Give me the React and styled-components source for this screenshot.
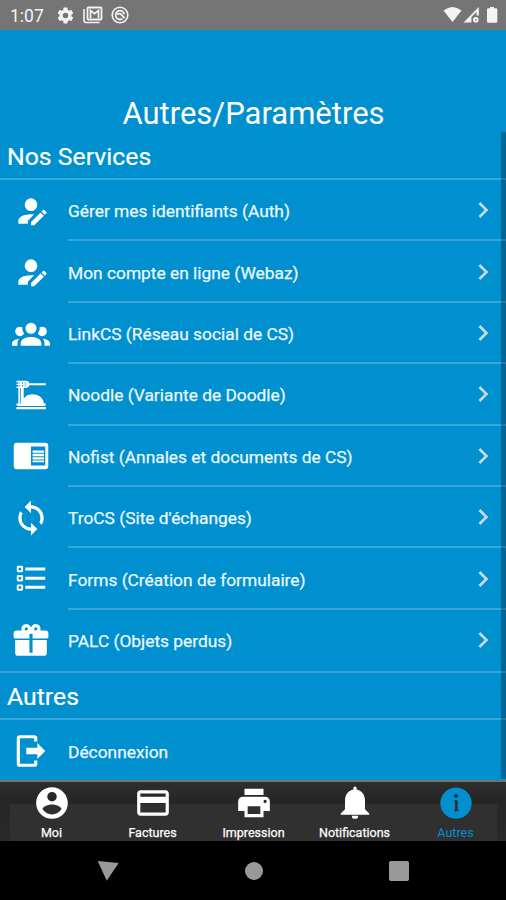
import React from 'react';
import styled, { createGlobalStyle } from 'styled-components';

const icons = {
  accountEdit:
    'M21.7,13.35L20.7,14.35L18.65,12.3L19.65,11.3C19.86,11.09 20.21,11.09 20.42,11.3L21.7,12.58C21.91,12.79 21.91,13.14 21.7,13.35M12,18.94L18.06,12.88L20.11,14.93L14.06,21H12V18.94M12,14C7.58,14 4,15.79 4,18V20H10V18.11L14,14.11C13.34,14.03 12.67,14 12,14M12,4A4,4 0 0,0 8,8A4,4 0 0,0 12,12A4,4 0 0,0 16,8A4,4 0 0,0 12,4Z',
  group:
    'M12,5.5A3.5,3.5 0 0,1 15.5,9A3.5,3.5 0 0,1 12,12.5A3.5,3.5 0 0,1 8.5,9A3.5,3.5 0 0,1 12,5.5M5,8C5.56,8 6.08,8.15 6.53,8.42C6.38,9.85 6.8,11.27 7.66,12.38C7.16,13.34 6.16,14 5,14A3,3 0 0,1 2,11A3,3 0 0,1 5,8M19,8A3,3 0 0,1 22,11A3,3 0 0,1 19,14C17.84,14 16.84,13.34 16.34,12.38C17.2,11.27 17.62,9.85 17.47,8.42C17.92,8.15 18.44,8 19,8M5.5,18.25C5.5,16.18 8.41,14.5 12,14.5C15.59,14.5 18.5,16.18 18.5,18.25V20H5.5V18.25M0,20V18.5C0,17.11 1.89,15.94 4.45,15.6C3.86,16.28 3.5,17.22 3.5,18.25V20H0M24,20H20.5V18.25C20.5,17.22 20.14,16.28 19.55,15.6C22.11,15.94 24,17.11 24,18.5V20Z',
  noodles:
    'M2.8,3H9.2Q10.6,3.3 11,4.6H21.3V5.9H11Q10.6,7.3 9.2,7.6H7.4V14.2C8.6,13.2 9,12.4 10.2,12C14.5,10.7 19.5,12.6 20.2,17.4H21.4V18.2L20.6,19H3.6L2.8,18.2V17.4H4V7.6H2.8V6.7H4V5.7H2.8V4.9H4V4H2.8ZM4.7,4V4.9H5.1V4ZM6.3,4V4.9H7V4ZM4.7,5.7V6.7H5.1V5.7ZM6.3,5.7V6.7H7V5.7ZM8.1,4V6.7H8.5V4ZM5,7.6V17.4H5.5V7.6ZM2.8,19.5H21.4V21H2.8Z',
  sync: 'M12,18A6,6 0 0,1 6,12C6,11 6.25,10.03 6.7,9.2L5.24,7.74C4.46,8.97 4,10.43 4,12A8,8 0 0,0 12,20V23L16,19L12,15M12,4V1L8,5L12,9V6A6,6 0 0,1 18,12C18,13 17.75,13.97 17.3,14.8L18.76,16.26C19.54,15.03 20,13.57 20,12A8,8 0 0,0 12,4Z',
  reader:
    'M3,3.6H21A1.9,1.9 0 0,1 22.9,5.5V18.5A1.9,1.9 0 0,1 21,20.4H3A1.9,1.9 0 0,1 1.1,18.5V5.5A1.9,1.9 0 0,1 3,3.6ZM12,6V18H21V6ZM13,8.6H20.2V10H13ZM13,10.6H20.2V12.2H13ZM13,12.8H20.2V14.2H13ZM13,14.8H20.2V15.9H13Z',
  list: 'M3.9,3.7H6.1A.9,.9 0 0,1 7,4.6V6.8A.9,.9 0 0,1 6.1,7.7H3.9A.9,.9 0 0,1 3,6.8V4.6A.9,.9 0 0,1 3.9,3.7ZM4.2,4.9V6.5H5.8V4.9ZM3.9,9.5H6.1A.9,.9 0 0,1 7,10.4V12.6A.9,.9 0 0,1 6.1,13.5H3.9A.9,.9 0 0,1 3,12.6V10.4A.9,.9 0 0,1 3.9,9.5ZM4.2,10.7V12.3H5.8V10.7ZM3.9,15.4H6.1A.9,.9 0 0,1 7,16.3V18.5A.9,.9 0 0,1 6.1,19.4H3.9A.9,.9 0 0,1 3,18.5V16.3A.9,.9 0 0,1 3.9,15.4ZM4.2,16.6V18.2H5.8V16.6ZM8.4,4.8H21V6.7H8.4ZM8.4,10.5H21V12.4H8.4ZM8.4,16.3H21V18.2H8.4Z',
  gift: 'M9.06,1.93C7.17,1.92 5.33,3.74 6.17,6H3A2,2 0 0,0 1,8V10A1,1 0 0,0 2,11H11V8H13V11H22A1,1 0 0,0 23,10V8A2,2 0 0,0 21,6H17.83C19,2.73 14.6,0.42 12.57,3.24L12,4L11.43,3.22C10.8,2.33 9.93,1.94 9.06,1.93M9,4C9.89,4 10.34,5.08 9.71,5.71C9.08,6.34 8,5.89 8,5A1,1 0 0,1 9,4M15,4C15.89,4 16.34,5.08 15.71,5.71C15.08,6.34 14,5.89 14,5A1,1 0 0,1 15,4M2,12V20A2,2 0 0,0 4,22H20A2,2 0 0,0 22,20V12H13V20H11V12H2Z',
  logout:
    'M16,17V14H9V10H16V7L21,12L16,17M14,2A2,2 0 0,1 16,4V6H14V4H5V20H14V18H16V20A2,2 0 0,1 14,22H5A2,2 0 0,1 3,20V4A2,2 0 0,1 5,2H14Z',
  chevron: 'M8.59,16.58L13.17,12L8.59,7.41L10,6L16,12L10,18L8.59,16.58Z',
  account:
    'M12,19.2C9.5,19.2 7.29,17.92 6,16C6.03,14 10,12.9 12,12.9C14,12.9 17.97,14 18,16C16.71,17.92 14.5,19.2 12,19.2M12,5A3,3 0 0,1 15,8A3,3 0 0,1 12,11A3,3 0 0,1 9,8A3,3 0 0,1 12,5M12,2A10,10 0 0,0 2,12A10,10 0 0,0 12,22A10,10 0 0,0 22,12C22,6.47 17.5,2 12,2Z',
  card: 'M20,8H4V6H20M20,18H4V12H20M20,4H4C2.89,4 2,4.89 2,6V18C2,19.11 2.9,20 4,20H20C21.11,20 22,19.11 22,18V6C22,4.89 21.1,4 20,4Z',
  printer:
    'M18,3H6V7H18M19,12A1,1 0 0,1 18,11A1,1 0 0,1 19,10A1,1 0 0,1 20,11A1,1 0 0,1 19,12M16,19H8V14H16M19,8H5A3,3 0 0,0 2,11V17H6V21H18V17H22V11A3,3 0 0,0 19,8Z',
  bell: 'M14,20A2,2 0 0,1 12,22A2,2 0 0,1 10,20H14M12,1.6A1,1 0 0,1 13,2.6V3.4C16,4 18.3,6.6 18.3,10V16L21,18.6V19.4H3V18.6L5.7,16V10C5.7,6.6 8,4 11,3.4V2.6A1,1 0 0,1 12,1.6Z',
  info: 'M12,2.2A9.9,9.9 0 1,0 12,22A9.9,9.9 0 1,0 12,2.2ZM12,6.4A1.2,1.2 0 1,1 12,8.8A1.2,1.2 0 1,1 12,6.4ZM11,10.3H13V16.2H13.5V17.2H10.8V16.2H11.4V11.3H11Z',
  settings:
    'M12,15.5A3.5,3.5 0 0,1 8.5,12A3.5,3.5 0 0,1 12,8.5A3.5,3.5 0 0,1 15.5,12A3.5,3.5 0 0,1 12,15.5M19.43,12.97C19.47,12.65 19.5,12.33 19.5,12C19.5,11.67 19.47,11.34 19.43,11L21.54,9.37C21.73,9.22 21.78,8.95 21.66,8.73L19.66,5.27C19.54,5.05 19.27,4.96 19.05,5.05L16.56,6.05C16.04,5.66 15.5,5.32 14.87,5.07L14.5,2.42C14.46,2.18 14.25,2 14,2H10C9.75,2 9.54,2.18 9.5,2.42L9.13,5.07C8.5,5.32 7.96,5.66 7.44,6.05L4.95,5.05C4.73,4.96 4.46,5.05 4.34,5.27L2.34,8.73C2.21,8.95 2.27,9.22 2.46,9.37L4.57,11C4.53,11.34 4.5,11.67 4.5,12C4.5,12.33 4.53,12.65 4.57,12.97L2.46,14.63C2.27,14.78 2.21,15.05 2.34,15.27L4.34,18.73C4.46,18.95 4.73,19.03 4.95,18.95L7.44,17.94C7.96,18.34 8.5,18.68 9.13,18.93L9.5,21.58C9.54,21.82 9.75,22 10,22H14C14.25,22 14.46,21.82 14.5,21.58L14.87,18.93C15.5,18.67 16.04,18.34 16.56,17.94L19.05,18.95C19.27,19.03 19.54,18.95 19.66,18.73L21.66,15.27C21.78,15.05 21.73,14.78 21.54,14.63L19.43,12.97Z',
};

const services = [
  { icon: 'accountEdit', label: 'Gérer mes identifiants (Auth)' },
  { icon: 'accountEdit', label: 'Mon compte en ligne (Webaz)' },
  { icon: 'group', label: 'LinkCS (Réseau social de CS)' },
  { icon: 'noodles', label: 'Noodle (Variante de Doodle)' },
  { icon: 'reader', label: 'Nofist (Annales et documents de CS)' },
  { icon: 'sync', label: "TroCS (Site d'échanges)" },
  { icon: 'list', label: 'Forms (Création de formulaire)' },
  { icon: 'gift', label: 'PALC (Objets perdus)' },
];

const tabs = [
  { icon: 'account', label: 'Moi' },
  { icon: 'card', label: 'Factures' },
  { icon: 'printer', label: 'Impression' },
  { icon: 'bell', label: 'Notifications' },
  { icon: 'info', label: 'Autres', active: true },
];

const Icon = ({ name, size = 38 }) => (
  <svg width={size} height={size} viewBox='0 0 24 24' fill='currentColor'>
    <path fillRule='evenodd' d={icons[name]} />
  </svg>
);

const StatusBar = () => (
  <Status>
    <Clock>1:07</Clock>
    <StatusIcons>
      <Icon name='settings' size={19} />
      <svg width='20' height='18' viewBox='0 0 20 18' fill='none' stroke='currentColor'>
        <path d='M1 3V14.5Q1 16.5 3 16.5H16.5' strokeWidth='1.6' />
        <rect x='4.5' y='1.5' width='14' height='12' rx='1' strokeWidth='1.8' />
        <path d='M7.5 12V4.5L11.5 7.6L15.5 4.5V12' strokeWidth='1.7' />
      </svg>
      <svg width='18' height='18' viewBox='0 0 18 18' fill='none' stroke='currentColor'>
        <circle cx='9' cy='9' r='7.8' strokeWidth='1.6' />
        <path
          d='M11.6 12.6A4.4 4.4 0 1 1 13.3 8.2M6.2 8.6Q8.6 6.6 10.4 8.6L13.6 12.2'
          strokeWidth='1.8'
        />
      </svg>
    </StatusIcons>
    <Signals width='56' height='18' viewBox='0 0 56 18' fill='currentColor'>
      <path d='M0.5 4.6Q9.5 -2.6 18.5 4.6L9.5 16Z' />
      <path
        fillRule='evenodd'
        d='M20.6 16.6L35.8 1V9.4H33.6V5.7L28.4 11V16.6ZM32.8 11A2.8 2.8 0 1 1 32.8 16.6A2.8 2.8 0 1 1 32.8 11ZM32.8 13.1A.8 .8 0 1 0 32.8 14.7A.8 .8 0 1 0 32.8 13.1Z'
      />
      <path d='M47 1H51V2.3H53Q54.3 2.3 54.3 3.6V15.3Q54.3 16.8 53 16.8H45.2Q44 16.8 44 15.3V3.6Q44 2.3 45.2 2.3H47Z' />
    </Signals>
  </Status>
);

const Service = ({ icon, label, last, arrow = true }) => (
  <Row>
    <IconCell>
      <Icon name={icon} />
    </IconCell>
    <RowBody $line={!last}>
      <RowLabel>{label}</RowLabel>
      {arrow && (
        <Chevron>
          <Icon name='chevron' size={32} />
        </Chevron>
      )}
    </RowBody>
  </Row>
);

const App = () => {
  return (
    <>
      <GlobalStyle />
      <Screen>
        <StatusBar />
        <Title>Autres/Paramètres</Title>
        <Content>
          <SectionTitle>Nos Services</SectionTitle>
          <List>
            {services.map((item, index) => (
              <Service
                key={item.label}
                {...item}
                last={index === services.length - 1}
              />
            ))}
          </List>
          <SectionTitle $divided>Autres</SectionTitle>
          <List>
            <Service icon='logout' label='Déconnexion' arrow={false} last />
          </List>
          <ScrollThumb />
        </Content>
        <TabBar>
          <TabList>
            {tabs.map(({ icon, label, active }) => (
              <Tab key={label} $active={active}>
                <Icon name={icon} />
                <span>{label}</span>
              </Tab>
            ))}
          </TabList>
        </TabBar>
        <SystemNav>
          <svg width='22' height='20' viewBox='0 0 22 20' fill='currentColor'>
            <path d='M0.7 0L21.7 2L9.7 19.7Z' />
          </svg>
          <HomeButton />
          <RecentButton />
        </SystemNav>
      </Screen>
    </>
  );
};

const GlobalStyle = createGlobalStyle`
  * {
    box-sizing: border-box;
  }

  body {
    margin: 0;
    background: #000;
    font-family: Roboto, sans-serif;
  }

  svg {
    display: block;
    flex: none;
  }
`;

const Screen = styled.div`
  width: 506px;
  height: 900px;
  display: flex;
  flex-direction: column;
  overflow: hidden;
  background: #008fcf;
  color: #fff;
`;

const Status = styled.header`
  height: 30px;
  flex: none;
  display: flex;
  align-items: center;
  padding: 0 7px 0 10px;
  background: #757575;
  color: #f4f4f4;
`;

const Clock = styled.span`
  width: 46px;
  font-size: 17.5px;
  line-height: 30px;
  padding-top: 1px;
`;

const StatusIcons = styled.div`
  display: flex;
  align-items: center;
  gap: 8px;
`;

const Signals = styled.svg`
  margin-left: auto;
`;

const Title = styled.h1`
  height: 102px;
  flex: none;
  margin: 0;
  padding: 64px 0 0 1px;
  font-size: 31px;
  font-weight: 400;
  line-height: 40px;
  text-align: center;
`;

const Content = styled.main`
  position: relative;
  height: 648px;
  flex: none;
`;

const SectionTitle = styled.h2`
  height: ${({ $divided }) => ($divided ? '49px' : '48px')};
  margin: 0;
  padding-left: 7px;
  border-top: ${({ $divided }) => ($divided ? '2px solid #3aa5db' : 'none')};
  border-bottom: 2px solid #3aa5db;
  font-size: 24.8px;
  font-weight: 400;
  line-height: ${({ $divided }) => ($divided ? '48px' : '50px')};
  -webkit-text-stroke: 0.2px currentColor;
`;

const List = styled.ul`
  margin: 0;
  padding: 0;
  list-style: none;
`;

const Row = styled.li`
  height: 61.4px;
  display: flex;
`;

const IconCell = styled.div`
  width: 68px;
  display: flex;
  align-items: center;
  padding-left: 12px;
`;

const RowBody = styled.div`
  flex: 1;
  display: flex;
  align-items: center;
  justify-content: space-between;
  padding: ${({ $line }) => ($line ? '1px 7px 0 0' : '0 7px 0 0')};
  border-bottom: ${({ $line }) => ($line ? '2px solid #3aa5db' : 'none')};
`;

const RowLabel = styled.span`
  padding-top: 2px;
  color: #eaf8ff;
  font-size: 17.35px;
  line-height: 24px;
  -webkit-text-stroke: 0.25px currentColor;
`;

const Chevron = styled.span`
  color: #c6dae5;
`;

const ScrollThumb = styled.div`
  position: absolute;
  top: 0;
  right: 0;
  width: 5px;
  height: 647px;
  background: rgba(0, 0, 0, 0.27);
`;

const TabBar = styled.nav`
  height: 61px;
  flex: none;
  border-top: 2px solid #737373;
  background: linear-gradient(#2e2e2e, #262626 18px, #292929);
`;

const TabList = styled.div`
  height: 59px;
  display: flex;
  padding-left: 1px;
  background: linear-gradient(#303030, #303030) 10px 22px / 487px 37px no-repeat;
`;

const Tab = styled.div`
  flex: 1;
  display: flex;
  flex-direction: column;
  align-items: center;
  padding-top: 2px;
  color: ${({ $active }) => ($active ? '#008fcf' : '#fff')};

  span {
    font-size: 12.5px;
    line-height: 14px;
    margin-top: 4px;
    -webkit-text-stroke: ${({ $active }) => ($active ? '0' : '0.25px')} currentColor;
  }
`;

const SystemNav = styled.footer`
  flex: 1;
  display: flex;
  justify-content: space-between;
  align-items: center;
  padding: 1px 97px 0;
  background: #000;
  color: #999;
`;

const HomeButton = styled.div`
  width: 18px;
  height: 18px;
  border-radius: 50%;
  background: #999;
`;

const RecentButton = styled.div`
  width: 20px;
  height: 20px;
  border-radius: 2px;
  background: #999;
`;

export default App;
